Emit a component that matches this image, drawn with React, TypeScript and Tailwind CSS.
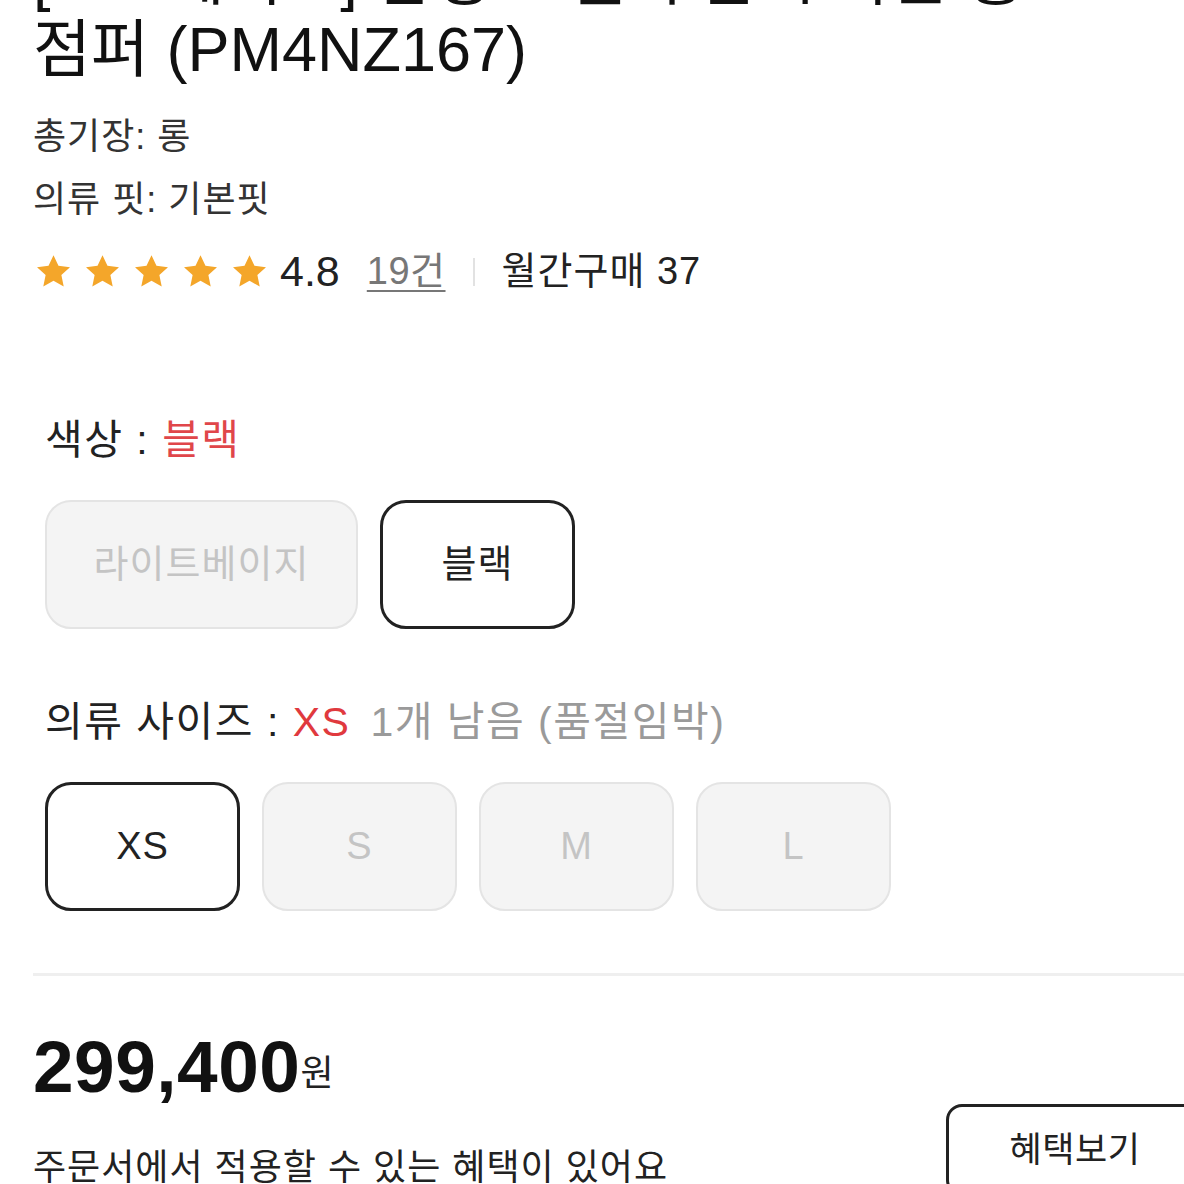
import React from "react";

const FONT = { fontFamily: '"Liberation Sans", "Noto Sans CJK KR", sans-serif' };

const Star = () => (
  <svg viewBox="0 0 24 24" className="w-[35px] h-[35px]" fill="#f4a62a">
    <path d="M12 0.8l3.4 7.3 7.9.9-5.9 5.4 1.6 7.9L12 18.3l-7 4 1.6-7.9L.7 9l7.9-.9z" />
  </svg>
);

const OptionButton = ({ label, selected, width }: { label: string; selected?: boolean; width: string }) => (
  <div
    className={
      selected
        ? `${width} h-[129px] shrink-0 rounded-[26px] border-[3px] border-[#222] bg-white flex items-center justify-center text-[38px] tracking-[1px] text-[#222]`
        : `${width} h-[129px] shrink-0 rounded-[26px] border-2 border-[#e4e4e4] bg-[#f4f4f4] flex items-center justify-center text-[38px] tracking-[1px] text-[#c4c4c4]`
    }
  >
    {label}
  </div>
);

export default function App() {
  const sizes = ["XS", "S", "M", "L"];
  return (
    <div className="w-[1184px] h-[1184px] overflow-hidden bg-white" style={FONT}>
      <div className="pl-[33px]">
        <h1 className="-mt-[59px] text-[63px] leading-[72px] text-[#111] font-normal whitespace-nowrap">
          [노스페이스] 남성 노벨티 눕시 다운 롱
          <br />
          점퍼 (PM4NZ167)
        </h1>

        <p className="mt-[20px] text-[36px] tracking-[1px] leading-[63px] text-[#333]">총기장: 롱</p>
        <p className="text-[36px] tracking-[1px] leading-[63px] text-[#333]">의류 핏: 기본핏</p>

        <div className="mt-[9px] h-[63px] flex items-center">
          <div className="flex items-center gap-[14px] pl-[3px]">
            {[0, 1, 2, 3, 4].map((i) => (
              <Star key={i} />
            ))}
          </div>
          <span className="ml-[13px] text-[43px] text-[#222]">4.8</span>
          <span className="ml-[27px] text-[38px] tracking-[0.5px] text-[#777] underline underline-offset-[6px] decoration-2">19건</span>
          <div className="mx-[27px] w-[2px] h-[28px] bg-[#e2e2e2]" />
          <span className="text-[38px] tracking-[1px] text-[#222]">월간구매 37</span>
        </div>

        <div className="pl-[12px]">
          <p className="mt-[109px] text-[41px] tracking-[1.5px] leading-[56px] text-[#222]">
            색상 : <span className="text-[#e0464a]">블랙</span>
          </p>
          <div className="mt-[32px] flex gap-[22px]">
            <OptionButton label="라이트베이지" width="w-[313px]" />
            <OptionButton label="블랙" width="w-[195px]" selected />
          </div>

          <p className="mt-[65px] text-[41px] tracking-[1.5px] leading-[56px] text-[#222] whitespace-nowrap">
            의류 사이즈 : <span className="text-[#e0393e]">XS</span>
            <span className="ml-[20px] text-[#9a9a9a]">1개 남음 (품절임박)</span>
          </p>
          <div className="mt-[32px] flex gap-[22px]">
            {sizes.map((s, i) => (
              <OptionButton key={s} label={s} width="w-[195px]" selected={i === 0} />
            ))}
          </div>
        </div>

        <div className="mt-[62px] h-[3px] bg-[#efefef]" />

        <div className="mt-[51px] h-[80px] flex items-center">
          <span className="text-[73px] font-bold tracking-[0.5px] text-[#111]">299,400</span>
          <span className="mt-[14px] text-[36px] text-[#222]">원</span>
        </div>

        <div className="-mt-[3px] flex items-start">
          <p className="w-[913px] shrink-0 mt-[40px] text-[36px] tracking-[1px] leading-[48px] text-[#222] whitespace-nowrap">
            주문서에서 적용할 수 있는 혜택이 있어요
          </p>
          <div className="w-[258px] h-[92px] shrink-0 rounded-[16px] border-[3px] border-[#222] flex items-center justify-center text-[35px] tracking-[0.5px] text-[#222]">
            혜택보기
          </div>
        </div>
      </div>
    </div>
  );
}
